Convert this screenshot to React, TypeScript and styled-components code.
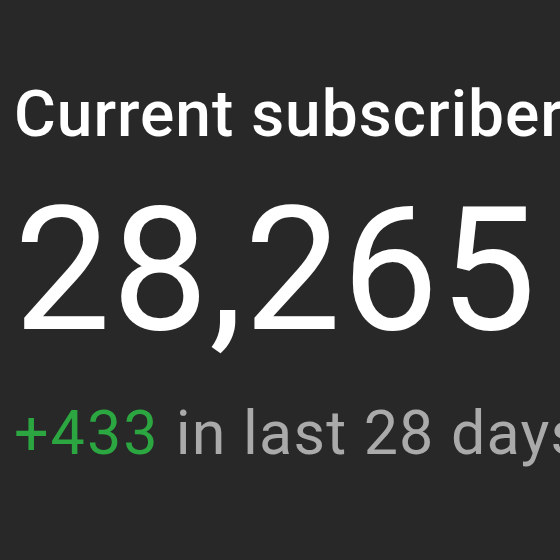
import React from 'react';
import styled, { createGlobalStyle } from 'styled-components';

const GlobalStyle = createGlobalStyle`
  html, body {
    margin: 0;
    padding: 0;
    background-color: #282828;
    overflow: hidden;
  }
`;

const Card = styled.section`
  display: flex;
  flex-direction: column;
  width: 560px;
  height: 560px;
  box-sizing: border-box;
  padding: 83px 0 0 14px;
  background-color: #282828;
  font-family: Roboto, 'Liberation Sans', sans-serif;
  white-space: nowrap;
  overflow: hidden;
`;

const Title = styled.h2`
  margin: 0;
  font-size: 64px;
  line-height: 64px;
  font-weight: 500;
  letter-spacing: 1px;
  color: #ffffff;
`;

const Count = styled.div`
  margin-top: 37px;
  font-size: 172px;
  line-height: 172px;
  font-weight: 400;
  letter-spacing: 1px;
  color: #ffffff;
`;

const Change = styled.p`
  margin: 47px 0 0;
  font-size: 61px;
  line-height: 60px;
  letter-spacing: 1.2px;
  color: #aaaaaa;
`;

const Delta = styled.span`
  color: #2ba640;
  letter-spacing: 2px;
`;

const App = () => {
  return (
    <>
      <GlobalStyle />
      <Card>
        <Title>Current subscribers</Title>
        <Count>28,265</Count>
        <Change>
          <Delta>+433</Delta> in last 28 days
        </Change>
      </Card>
    </>
  );
};

export default App;
